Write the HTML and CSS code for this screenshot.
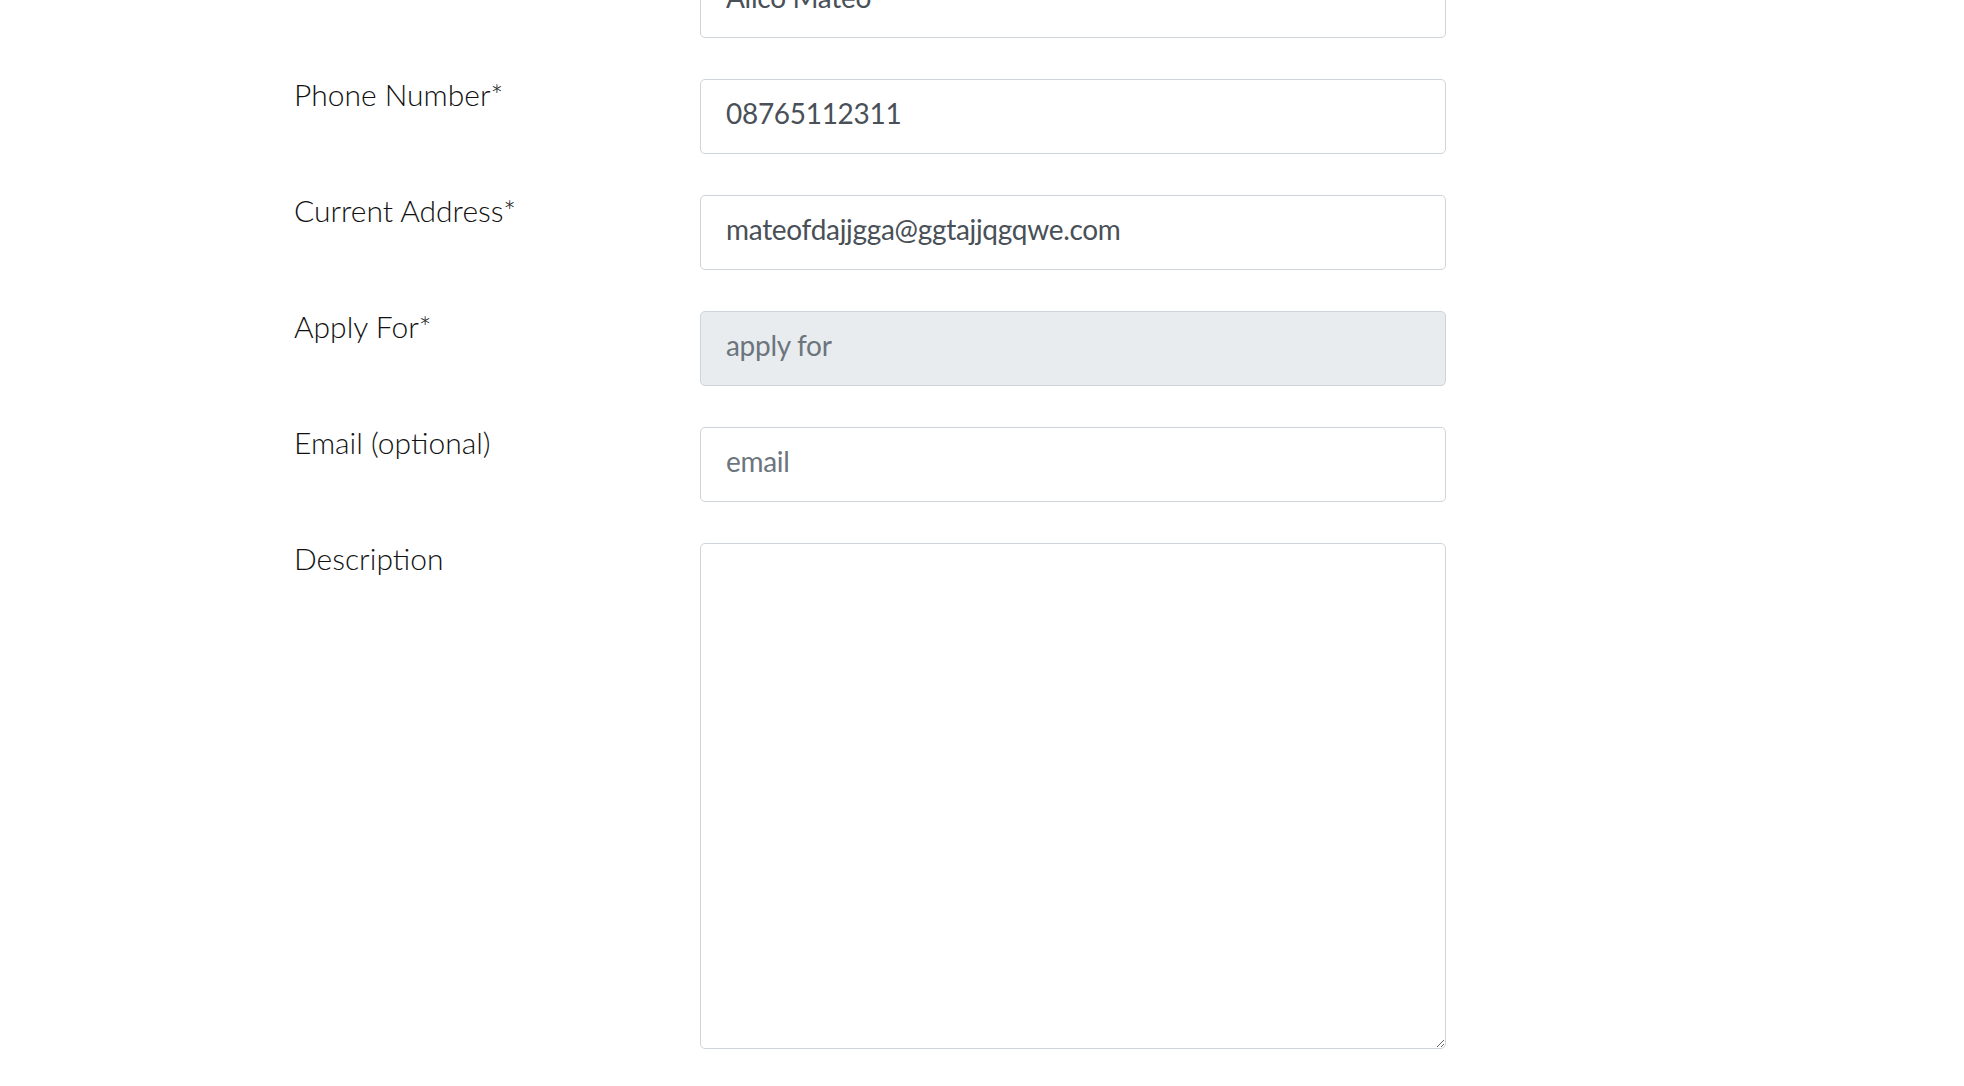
FILE: index.html
```html
<!DOCTYPE html>
<html>
<head>
  <title>Apply</title>
  <link rel="stylesheet" href="styles.css">
</head>
<body>
  <form class="apply-form">
    <div class="form-row">
      <label for="fullName">Full Name*</label>
      <input type="text" id="fullName" class="form-control" value="Alico Mateo">
    </div>
    <div class="form-row">
      <label for="phone">Phone Number*</label>
      <input type="text" id="phone" class="form-control" value="08765112311">
    </div>
    <div class="form-row">
      <label for="address">Current Address*</label>
      <input type="text" id="address" class="form-control" value="mateofdajjgga@ggtajjqgqwe.com">
    </div>
    <div class="form-row">
      <label for="applyFor">Apply For*</label>
      <input type="text" id="applyFor" class="form-control" placeholder="apply for" disabled>
    </div>
    <div class="form-row">
      <label for="email">Email (optional)</label>
      <input type="email" id="email" class="form-control" placeholder="email">
    </div>
    <div class="form-row">
      <label for="description">Description</label>
      <textarea id="description" class="form-control description"></textarea>
    </div>
  </form>
</body>
</html>
```

FILE: styles.css
```css
body {
  margin: 0;
  background: #fff;
  font-family: Lato, "Open Sans", sans-serif;
}
.apply-form {
  margin-top: -37px;
  padding-left: 294px;
}
.form-row {
  display: grid;
  grid-template-columns: 406px 746px;
  align-items: start;
  margin-bottom: 41px;
}
label {
  font-size: 30px;
  font-weight: 300;
  line-height: 30px;
  color: #111;
}
.form-control {
  box-sizing: border-box;
  width: 100%;
  height: 75px;
  margin: 0;
  padding: 0 25px 8px;
  font-family: Lato, "Open Sans", sans-serif;
  font-size: 28px;
  letter-spacing: -0.3px;
  color: #495057;
  background: #fff;
  border: 1px solid #ced4da;
  border-radius: 5px;
  outline: none;
}
.form-control::placeholder {
  color: #6c757d;
}
.form-control:disabled {
  background: #e9ecef;
}
.description {
  height: 506px;
  padding: 12px 25px;
  resize: vertical;
}
```
